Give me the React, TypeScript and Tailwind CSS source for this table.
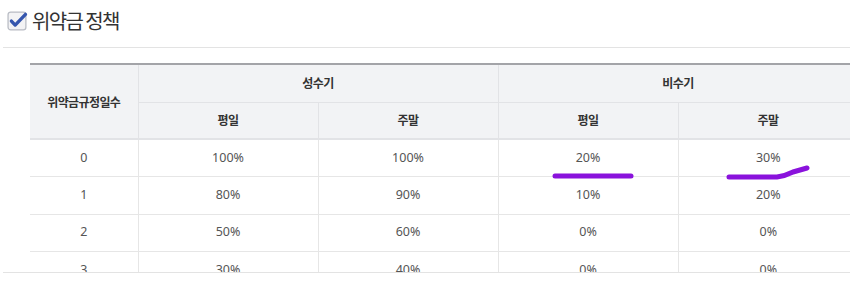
import React from 'react'

const ROWS: { day: string; peakWeekday: string; peakWeekend: string; offWeekday: string; offWeekend: string }[] = [
  { day: '0', peakWeekday: '100%', peakWeekend: '100%', offWeekday: '20%', offWeekend: '30%' },
  { day: '1', peakWeekday: '80%',  peakWeekend: '90%',  offWeekday: '10%', offWeekend: '20%' },
  { day: '2', peakWeekday: '50%',  peakWeekend: '60%',  offWeekday: '0%',  offWeekend: '0%' },
  { day: '3', peakWeekday: '30%',  peakWeekend: '40%',  offWeekday: '0%',  offWeekend: '0%' },
]

const KR = "font-['Noto_Sans_CJK_KR',sans-serif]"
const NUM = "font-['Noto_Sans','Noto_Sans_CJK_KR',sans-serif]"

function CheckIcon() {
  return (
    <svg width="21" height="21" viewBox="0 0 20 20" className="shrink-0">
      <rect x="1" y="1" width="17" height="17" rx="2.5" fill="#f3f3f5" stroke="#b9bcc4" strokeWidth="1.2" />
      <path d="M4.2 9.6 L7.8 13.4 L17.6 3.2" fill="none" stroke="#3556ae" strokeWidth="3.2" strokeLinecap="round" strokeLinejoin="round" />
    </svg>
  )
}

export default function App() {
  const th = `bg-[#f2f3f5] text-[#333] font-bold text-[12px] tracking-[-0.05em] text-center align-middle border-[#e2e3e6] ${KR}`
  const td = `text-[#555] text-[12.5px] text-center align-middle border-[#e6e6e6] ${NUM}`

  return (
    <div className="w-[850px] h-[281px] bg-white overflow-hidden">
      {/* Title */}
      <div className="h-[47px] flex items-center pl-[7px] pb-[5px] gap-[4px]">
        <CheckIcon />
        <h2 className={`text-[20px] text-[#333] tracking-[-1.6px] leading-none ${KR}`}>위약금 정책</h2>
      </div>

      {/* Table area */}
      <div className="relative ml-[3px] h-[226px] border-t border-b border-[#e3e3e3] overflow-hidden pt-[15px] pl-[27px]">
        <table className="border-collapse table-fixed w-[908px]">
          <colgroup>
            <col className="w-[108px]" />
            <col className="w-[180px]" />
            <col className="w-[180px]" />
            <col className="w-[180px]" />
            <col className="w-[180px]" />
            <col className="w-[80px]" />
          </colgroup>
          <thead>
            <tr className="h-[38px] border-t-2 border-[#a3a4a8]">
              <th rowSpan={2} className={`${th} border-r border-b-2`}>위약금규정일수</th>
              <th colSpan={2} className={`${th} border-r border-b`}>성수기</th>
              <th colSpan={2} className={`${th} border-r border-b`}>비수기</th>
              <th rowSpan={2} className={`${th} border-l border-[#fafafa] border-b-2`}></th>
            </tr>
            <tr className="h-[37px]">
              <th className={`${th} border-r border-b-2`}>평일</th>
              <th className={`${th} border-r border-b-2`}>주말</th>
              <th className={`${th} border-r border-b-2`}>평일</th>
              <th className={`${th} border-b-2`}>주말</th>
            </tr>
          </thead>
          <tbody>
            {ROWS.map(r => (
              <tr key={r.day} className="h-[37.5px]">
                <td className={`${td} border-r border-b`}>{r.day}</td>
                <td className={`${td} border-r border-b`}>{r.peakWeekday}</td>
                <td className={`${td} border-r border-b`}>{r.peakWeekend}</td>
                <td className={`${td} border-r border-b`}>{r.offWeekday}</td>
                <td className={`${td} border-b`}>{r.offWeekend}</td>
                <td className={`${td} border-b`}></td>
              </tr>
            ))}
          </tbody>
        </table>

        {/* hand-drawn highlight marks */}
        <svg className="absolute left-0 top-0 pointer-events-none" width="847" height="224" viewBox="0 0 847 224">
          <path d="M552 128 L628 128" fill="none" stroke="#8a12dc" strokeWidth="5" strokeLinecap="round" />
          <path d="M726 129 L774 129 Q782 128 790 124 L804 120" fill="none" stroke="#8a12dc" strokeWidth="5" strokeLinecap="round" strokeLinejoin="round" />
        </svg>
      </div>
    </div>
  )
}
